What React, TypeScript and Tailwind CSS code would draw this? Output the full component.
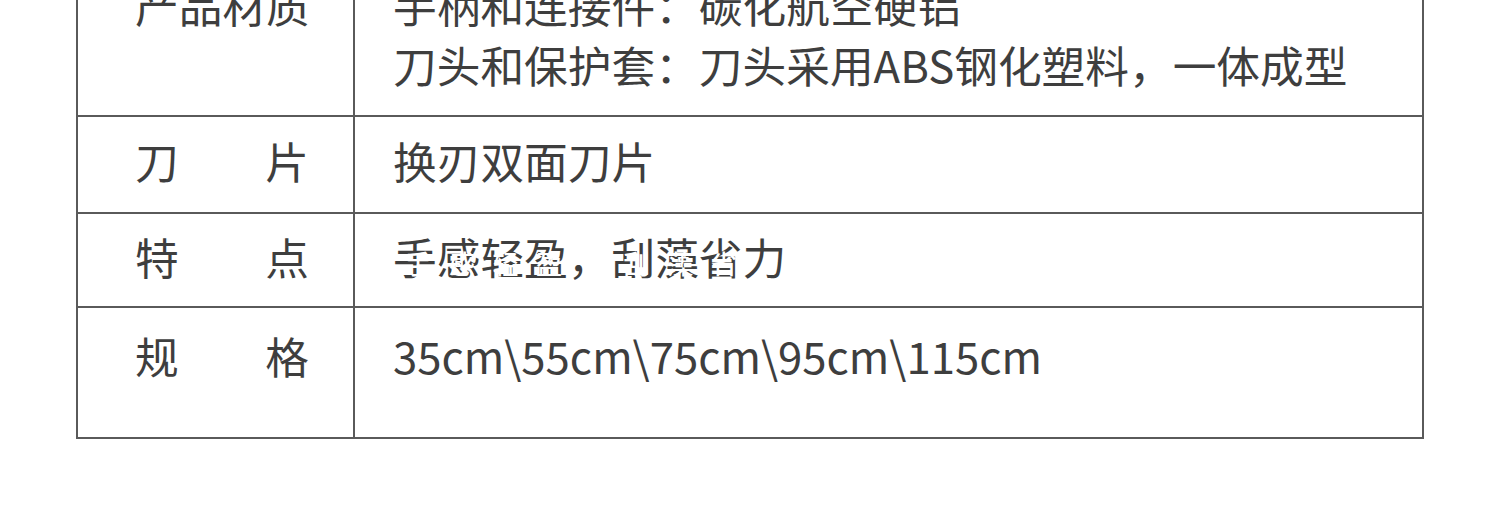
import React from "react";

const font = { fontFamily: '"Noto Sans CJK SC", "Noto Sans", sans-serif' };

function Label({ chars }: { chars: string[] }) {
  return (
    <div className="flex w-[174px] justify-between">
      {chars.map((c, i) => (
        <span key={i}>{c}</span>
      ))}
    </div>
  );
}

export default function App() {
  return (
    <div className="h-[518px] w-[1500px] overflow-hidden bg-white text-[#3e3e3e]" style={font}>
      <div className="-mt-[42px] ml-[76px] w-[1348px] border-2 border-[#5a5a5a] text-[43.7px] leading-[60px]">
        <div className="flex h-[155px]">
          <div className="w-[277px] shrink-0 border-r-2 border-[#5a5a5a] pl-[57px] pt-[14px]">
            <Label chars={["产", "品", "材", "质"]} />
          </div>
          <div className="pl-[38px] pt-[14px]">
            <div>手柄和连接件：碳化航空硬铝</div>
            <div>刀头和保护套：刀头采用ABS钢化塑料，一体成型</div>
          </div>
        </div>
        <div className="flex h-[97px] border-t-2 border-[#5a5a5a]">
          <div className="w-[277px] shrink-0 border-r-2 border-[#5a5a5a] pl-[57px] pt-[13px]">
            <Label chars={["刀", "片"]} />
          </div>
          <div className="pl-[38px] pt-[13px]">换刃双面刀片</div>
        </div>
        <div className="flex h-[94px] border-t-2 border-[#5a5a5a]">
          <div className="w-[277px] shrink-0 border-r-2 border-[#5a5a5a] pl-[57px] pt-[12px]">
            <Label chars={["特", "点"]} />
          </div>
          <div className="relative pl-[38px] pt-[12px]">
            <span>手感轻盈，刮藻省力</span>
            <span className="pointer-events-none absolute left-[50px] top-[19px] text-[26px] font-medium tracking-[17.7px] text-white">
              手感轻盈，刮藻省力
            </span>
          </div>
        </div>
        <div className="flex h-[131px] border-t-2 border-[#5a5a5a]">
          <div className="w-[277px] shrink-0 border-r-2 border-[#5a5a5a] pl-[57px] pt-[17px]">
            <Label chars={["规", "格"]} />
          </div>
          <div className="pl-[38px] pt-[17px]">35cm\55cm\75cm\95cm\115cm</div>
        </div>
      </div>
    </div>
  );
}
